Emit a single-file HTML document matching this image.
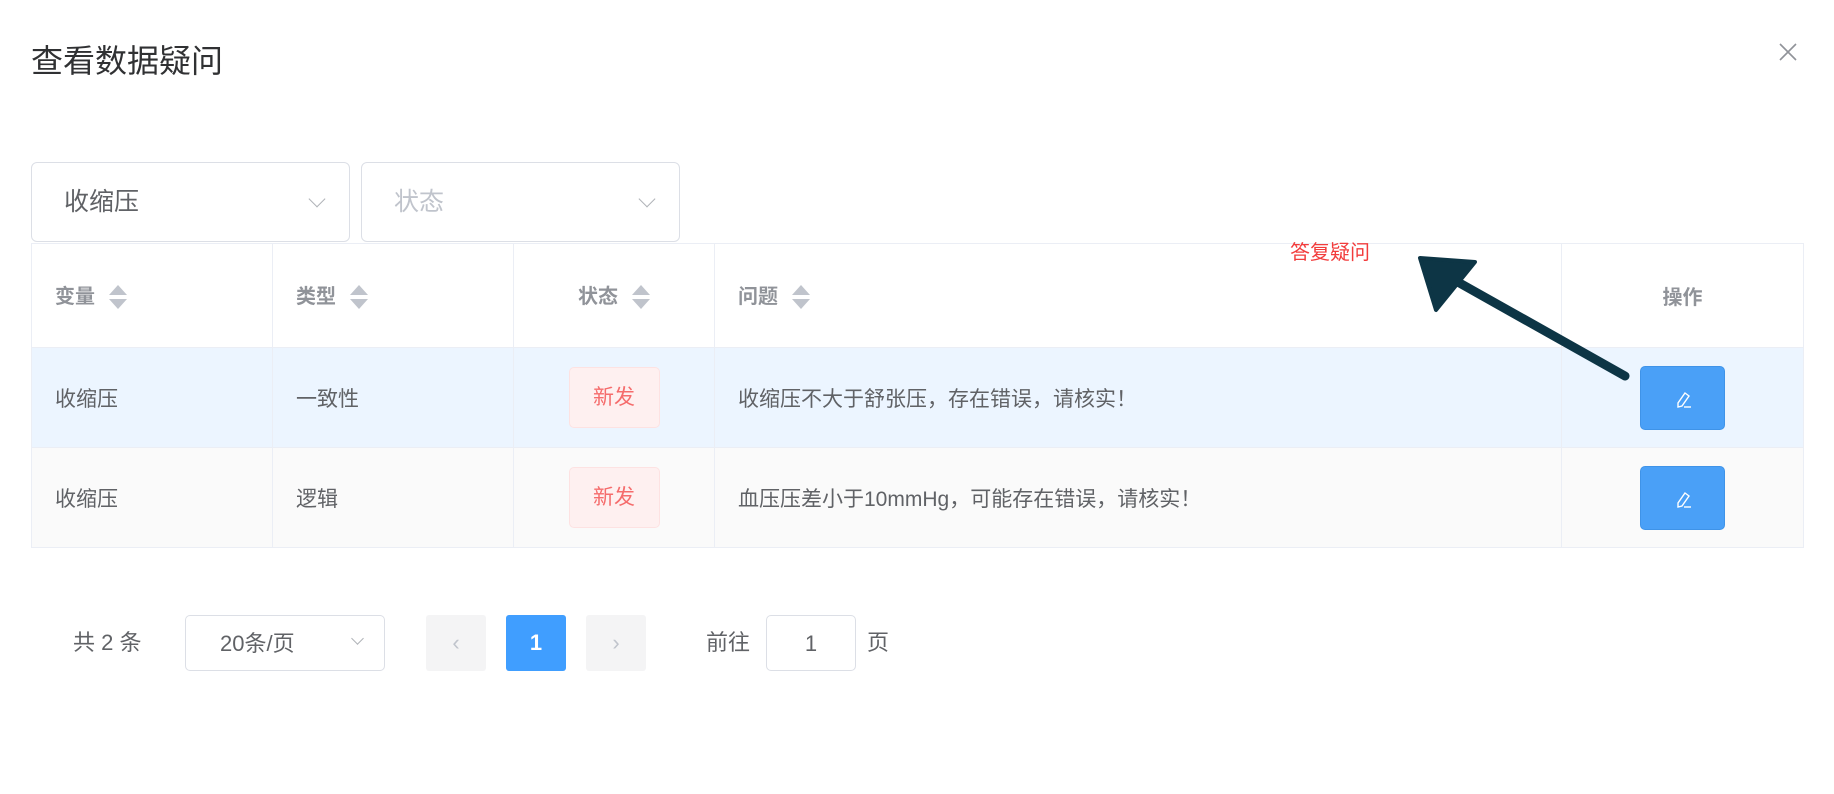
<!DOCTYPE html>
<html><head><meta charset="utf-8">
<style>
body{margin:0;width:1834px;height:794px;background:#fff;position:relative;overflow:hidden;font-family:"Liberation Sans","Noto Sans CJK SC",sans-serif;color:#606266}
.a{position:absolute}
.title{left:31px;top:36px;font-size:32px;color:#303133}
.sel{border:1px solid #dcdfe6;border-radius:6px;height:80px;box-sizing:border-box;top:162px;width:319px;font-size:25px;line-height:78px;padding-left:32px}
.chev{position:absolute;right:26px;top:30px;width:11px;height:11px;border-right:1.5px solid #b0b3b8;border-bottom:1.5px solid #b0b3b8;transform:rotate(45deg)}
table{position:absolute;left:31px;top:243px;width:1772px;border-collapse:collapse;font-size:21px;table-layout:fixed}
td,th{border:1px solid #ebeef5;padding:0 0 0 23px;text-align:left}
th{height:103px;color:#909399;font-weight:600;font-size:20px}
tr.r1{background:#ecf5ff}tr.r2{background:#fafafa}
td{height:99px}
.sort{display:inline-block;vertical-align:middle;margin-left:14px;width:18px;height:26px;position:relative}
.sort:before{content:"";position:absolute;left:0;top:0;border:9px solid transparent;border-bottom:10px solid #c0c4cc;border-top:0}
.sort:after{content:"";position:absolute;left:0;top:14px;border:9px solid transparent;border-top:10px solid #c0c4cc;border-bottom:0}
.tag{display:inline-block;width:91px;height:61px;line-height:59px;box-sizing:border-box;background:#fef0f0;border:1px solid #fde2e2;border-radius:5px;color:#f56c6c;text-align:center}
.btn{display:inline-block;width:85px;height:64px;background:#4aa0f7;border-radius:5px;border:1px solid #3f93e8;box-sizing:border-box;vertical-align:middle}
.pg{font-size:22px;top:615px;height:56px;line-height:56px}
.box{border:1px solid #dcdfe6;border-radius:5px;box-sizing:border-box}
</style></head><body>
<div class="a title">查看数据疑问</div>
<svg class="a" style="left:1779px;top:43px" width="18" height="18"><path d="M1 1L17 17M17 1L1 17" stroke="#909399" stroke-width="1.6"/></svg>
<div class="a sel" style="left:31px;color:#606266">收缩压<span class="chev"></span></div>
<div class="a sel" style="left:361px;color:#c0c4cc">状态<span class="chev"></span></div>
<table>
<colgroup><col style="width:241px"><col style="width:241px"><col style="width:201px"><col style="width:847px"><col style="width:242px"></colgroup>
<tr><th>变量<span class="sort"></span></th><th>类型<span class="sort"></span></th><th style="text-align:center;padding:0">状态<span class="sort"></span></th><th>问题<span class="sort"></span></th><th style="text-align:center;padding:0">操作</th></tr>
<tr class="r1"><td>收缩压</td><td>一致性</td><td style="text-align:center;padding:0"><span class="tag">新发</span></td><td>收缩压不大于舒张压，存在错误，请核实！</td><td style="text-align:center;padding:0"><span class="btn"><svg width="85" height="64"><path d="M44 26l4 3-7 10-4 1 0-4z" fill="none" stroke="#fff" stroke-width="1.4"/><path d="M43 40h7" stroke="#fff" stroke-width="1.4"/></svg></span></td></tr>
<tr class="r2"><td>收缩压</td><td>逻辑</td><td style="text-align:center;padding:0"><span class="tag">新发</span></td><td>血压压差小于10mmHg，可能存在错误，请核实！</td><td style="text-align:center;padding:0"><span class="btn"><svg width="85" height="64"><path d="M44 26l4 3-7 10-4 1 0-4z" fill="none" stroke="#fff" stroke-width="1.4"/><path d="M43 40h7" stroke="#fff" stroke-width="1.4"/></svg></span></td></tr>
</table>
<div class="a" style="left:1290px;top:236px;font-size:20px;color:#f23c3c">答复疑问</div>
<svg class="a" style="left:0;top:0" width="1834" height="794"><path d="M1625 376L1440 272" stroke="#0d3545" stroke-width="9" stroke-linecap="round"/><path d="M1420 258L1475 262L1436 310Z" fill="#0d3545" stroke="#0d3545" stroke-width="4" stroke-linejoin="round"/></svg>
<div class="a pg" style="left:73px">共 2 条</div>
<div class="a pg box" style="left:185px;width:200px;padding-left:34px">20条/页<span class="chev" style="right:22px;top:18px;width:8px;height:8px"></span></div>
<div class="a pg" style="left:426px;width:60px;background:#f4f4f5;border-radius:3px;text-align:center;color:#c0c4cc">&#8249;</div>
<div class="a pg" style="left:506px;width:60px;background:#409eff;border-radius:3px;text-align:center;color:#fff;font-weight:bold">1</div>
<div class="a pg" style="left:586px;width:60px;background:#f4f4f5;border-radius:3px;text-align:center;color:#c0c4cc">&#8250;</div>
<div class="a pg" style="left:706px">前往</div>
<div class="a pg box" style="left:766px;width:90px;text-align:center">1</div>
<div class="a pg" style="left:867px">页</div>
</body></html>
